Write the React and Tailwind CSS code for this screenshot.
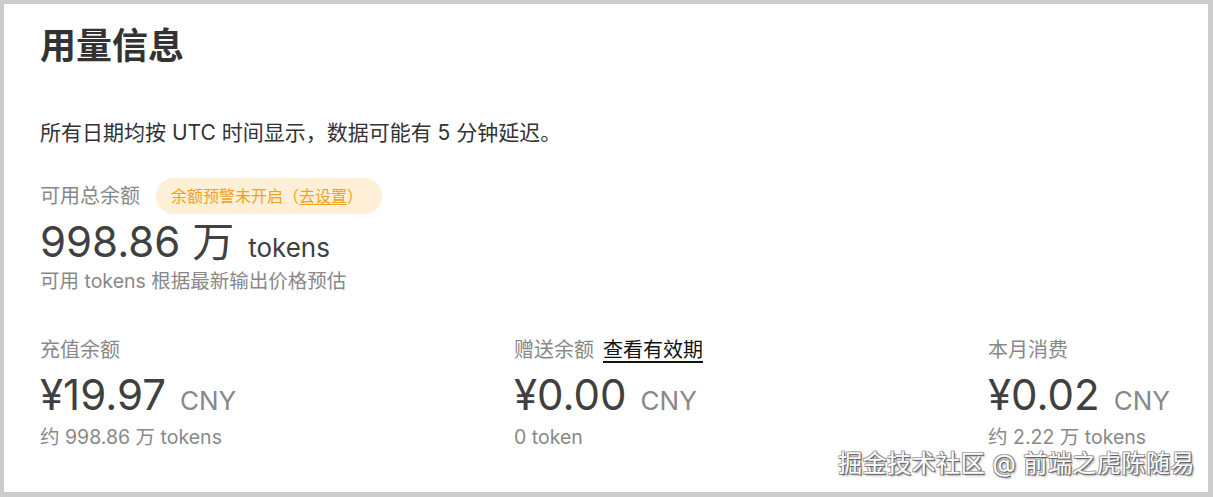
export default function App() {
  const font = { fontFamily: 'Inter, "Noto Sans CJK SC", sans-serif' };
  return (
    <div className="w-[1213px] h-[497px] bg-[#cccccc] pt-[4px] pl-[4px] pr-[5px] pb-[5px]" style={font}>
      <div className="relative w-full h-full bg-white pl-[36px] pr-[38px] pt-[18px] overflow-hidden">
        <h1 className="text-[36px] leading-[48px] font-bold text-[#333333]">用量信息</h1>
        <p className="mt-[48px] text-[21px] leading-[30px] text-[#333333]">所有日期均按 UTC 时间显示，数据可能有 5 分钟延迟。</p>
        <div className="mt-[30px] flex items-center gap-[16px]">
          <span className="text-[20px] leading-[28px] text-[#888888]">可用总余额</span>
          <span className="h-[36px] pl-[15px] pr-[19px] rounded-full bg-[#fdf0d6] text-[#f2a01e] text-[16px] flex items-center">
            余额预警未开启（<span className="underline underline-offset-2">去设置</span>）
          </span>
        </div>
        <div className="mt-[2px] flex items-baseline text-[#404040]">
          <span className="text-[42px] leading-[52px]">998.86 万</span>
          <span className="ml-[14px] text-[26px]">tokens</span>
        </div>
        <p className="mt-[-2px] text-[19.5px] leading-[30px] text-[#888888]">可用 tokens 根据最新输出价格预估</p>
        <div className="mt-[39px] grid grid-cols-[474px_474px_auto]">
          <Stat label="充值余额" amount="¥19.97" sub="约 998.86 万 tokens" />
          <Stat label="赠送余额" link="查看有效期" amount="¥0.00" sub="0 token" />
          <Stat label="本月消费" amount="¥0.02" sub="约 2.22 万 tokens" />
        </div>
        <div
          className="absolute right-[13px] bottom-[12px] text-[24px] leading-[32px] text-white tracking-[0.5px]"
          style={{ textShadow: '1px 1px 0 #666, -1px -1px 0 #aaa, 1px -1px 0 #999, -1px 1px 0 #999, 2px 2px 2px rgba(0,0,0,0.35)' }}
        >
          掘金技术社区 @ 前端之虎陈随易
        </div>
      </div>
    </div>
  );
}

function Stat({ label, link, amount, sub }) {
  return (
    <div className="flex flex-col">
      <div className="flex items-center gap-[9px] text-[20px] leading-[30px]">
        <span className="text-[#888888]">{label}</span>
        {link && <span className="text-[#111111] underline underline-offset-4">{link}</span>}
      </div>
      <div className="mt-[4px] flex items-baseline">
        <span className="text-[42px] leading-[52px] text-[#404040]">{amount}</span>
        <span className="ml-[14px] text-[26px] text-[#888888]">CNY</span>
      </div>
      <div className="mt-[1px] text-[19.5px] leading-[30px] text-[#888888]">{sub}</div>
    </div>
  );
}
